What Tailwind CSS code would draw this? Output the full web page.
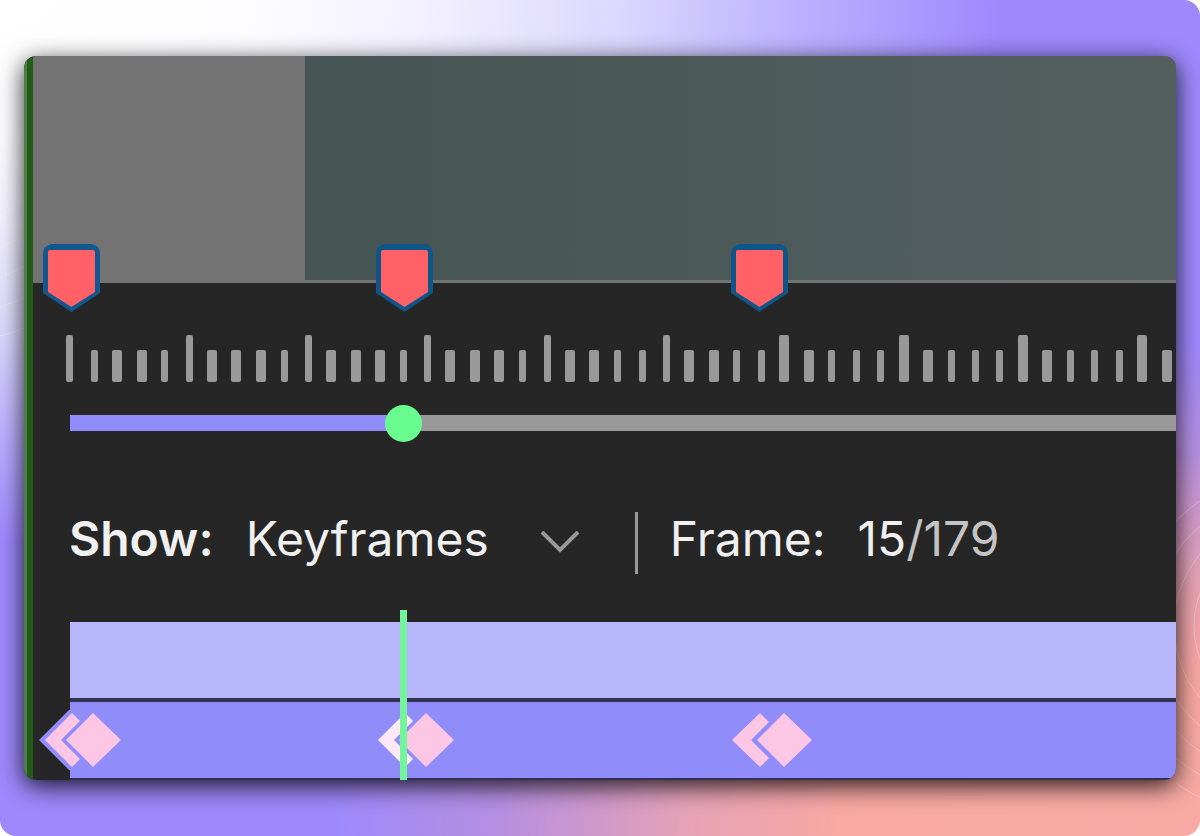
<!DOCTYPE html>
<html lang="en">
<head>
    <meta charset="UTF-8">
    <meta name="viewport" content="width=device-width, initial-scale=1.0">
    <title>Keyframe Timeline</title>
    <script src="https://cdn.jsdelivr.net/npm/@tailwindcss/browser@4"></script>
</head>
<body class="bg-white">
    <!-- Backdrop -->
    <div class="relative min-h-screen flex flex-col overflow-hidden rounded-2xl px-6 py-14 font-['Inter','Liberation_Sans',sans-serif] bg-[radial-gradient(ellipse_1000px_540px_at_0_0,#ffffff_0%,#fdfdff_25%,#f3f1ff_42%,#dcd7fd_62%,#b9acff_82%,transparent_100%),radial-gradient(ellipse_780px_500px_at_1110px_840px,#f9aaa6_0%,#f9a8a2_35%,#e5a2b8_55%,#b78fe0_78%,transparent_100%)] bg-[#9d89fd]">
        <!-- Faint rings at both edges -->
        <svg class="absolute left-0 top-0 w-6 h-full" fill="none" stroke="#fff" stroke-opacity=".35" aria-hidden="true">
            <circle cx="-60" cy="112" r="65" />
            <circle cx="-60" cy="112" r="92" />
            <circle cx="-60" cy="112" r="120" />
            <circle cx="-60" cy="112" r="148" />
            <circle cx="-60" cy="112" r="176" />
            <circle cx="-60" cy="112" r="204" />
            <circle cx="-60" cy="112" r="232" />
        </svg>
        <svg class="absolute right-0 bottom-0 w-6 h-[340px]" fill="none" stroke="#fff" stroke-opacity=".3" aria-hidden="true">
            <circle cx="110" cy="130" r="92" />
            <circle cx="110" cy="130" r="112" />
            <circle cx="110" cy="130" r="132" />
            <circle cx="110" cy="130" r="152" />
            <circle cx="110" cy="130" r="172" />
            <circle cx="110" cy="130" r="192" />
        </svg>

        <!-- Editor Panel -->
        <main class="relative flex flex-1 rounded-xl shadow-[0_6px_24px_rgba(0,0,0,0.85)]">
            <div class="flex flex-1 min-w-0 overflow-hidden rounded-xl bg-[#262626]">
                <div class="w-[3px] shrink-0 bg-[#4f7f49]"></div>
                <div class="w-[6px] shrink-0 bg-[#255b18]"></div>

                <div class="flex-1 min-w-0">
                    <!-- Preview -->
                    <section class="flex h-[227px] bg-[#737373]" aria-label="Preview">
                        <div class="w-[272px] shrink-0"></div>
                        <div class="flex-1 mb-[3px] bg-linear-to-r from-[#455553] via-[#4c5a5a] via-50% to-[#555f60]"></div>
                    </section>

                    <!-- Ruler -->
                    <section class="relative pt-13" aria-label="Ruler">
                        <svg class="absolute -top-10 left-2 w-[60px] h-[70px]" viewBox="0 0 60 70">
                            <path d="M10 1H51Q59 3 59 11V50L30.500 69L2 50V11Q2 3 10 1Z" fill="#11588f" />
                            <path d="M9 7H52Q54 7 54 9V49L30.500 64L7 49V9Q7 7 9 7Z" fill="#ff6166" />
                        </svg>
                        <svg class="absolute -top-10 left-[341px] w-[60px] h-[70px]" viewBox="0 0 60 70">
                            <path d="M10 1H51Q59 3 59 11V50L30.500 69L2 50V11Q2 3 10 1Z" fill="#0e5688" />
                            <path d="M9 7H52Q54 7 54 9V49L30.500 64L7 49V9Q7 7 9 7Z" fill="#ff6166" />
                        </svg>
                        <svg class="absolute -top-10 left-[696px] w-[60px] h-[70px]" viewBox="0 0 60 70">
                            <path d="M10 1H51Q59 3 59 11V50L30.500 69L2 50V11Q2 3 10 1Z" fill="#0e5688" />
                            <path d="M9 7H52Q54 7 54 9V49L30.500 64L7 49V9Q7 7 9 7Z" fill="#ff6166" />
                        </svg>

                        <svg id="ticks" class="block w-full h-[47px]" fill="#999" aria-hidden="true"></svg>

                        <div class="mt-[33px] pl-[19px] h-4 flex items-center">
                            <input id="scrubber" type="range" min="1" max="179" value="15" aria-label="Current frame" class="block shrink-0 w-[4270px] h-4 appearance-none outline-none bg-[linear-gradient(to_right,transparent_18px,#908dfb_18px,#908dfb_352px,#999999_352px)] [&::-webkit-slider-thumb]:appearance-none [&::-webkit-slider-thumb]:size-[37px] [&::-webkit-slider-thumb]:rounded-full [&::-webkit-slider-thumb]:bg-[#69fd8f]">
                        </div>
                    </section>

                    <!-- Controls -->
                    <section class="flex items-center mt-[81px] h-[62px] pl-9 text-[48px] leading-[54px] text-[#f0f0f0]">
                        <label for="show" class="pb-2 font-semibold">Show:</label>
                        <div class="relative flex items-center ml-8">
                            <select id="show" class="appearance-none w-[389px] pb-2 bg-transparent outline-none">
                                <option>Keyframes</option>
                                <option>All frames</option>
                            </select>
                            <svg class="absolute right-[54px] w-[42px] h-6 pointer-events-none" viewBox="0 0 42 24" fill="none" stroke="#999" stroke-width="4">
                                <path d="M3 1L21 19L39 1" />
                            </svg>
                        </div>
                        <div class="w-[3px] h-full shrink-0 bg-[#999]"></div>
                        <p class="flex pb-2 ml-8 whitespace-nowrap">
                            <span>Frame:</span>
                            <output for="scrubber" class="ml-8">15<span class="text-[#c4c4c4]">/179</span></output>
                        </p>
                    </section>

                    <!-- Tracks -->
                    <section class="relative mt-12 pl-[37px]" aria-label="Tracks">
                        <div class="h-[76px] bg-[#b9b7fc]"></div>
                        <div class="h-1 bg-[#343052]"></div>
                        <div class="h-[76px] bg-[#908dfb]"></div>
                        <div class="h-[2px] bg-[#343052]"></div>

                        <svg class="absolute left-1 top-[88px] w-[86px] h-[60px]" viewBox="0 0 86 60">
                            <path d="M2 30L33 -1L33 61Z" fill="#908dfb" />
                            <path d="M8 30L35 3L43 11L24 30L43 49L35 57Z" fill="#fdc6e4" />
                            <path d="M29 30L56 3L84 30L56 57Z" fill="#fdc6e4" />
                        </svg>
                        <svg class="absolute left-[337px] top-[88px] w-[86px] h-[60px]" viewBox="0 0 86 60">
                            <path d="M8 30L35 3L43 11L24 30L43 49L35 57Z" fill="#fde8f8" />
                            <path d="M29 30L56 3L84 30L56 57Z" fill="#fdc6e4" />
                        </svg>
                        <svg class="absolute left-[695px] top-[88px] w-[86px] h-[60px]" viewBox="0 0 86 60">
                            <path d="M4 30L32 3L41 12L23 30L41 48L32 57Z" fill="#fdc6e4" />
                            <path d="M29 30L56 3L84 30L56 57Z" fill="#fdc6e4" />
                        </svg>

                        <!-- Playhead -->
                        <div class="absolute left-[367px] -top-3 bottom-0 w-[7px] bg-[#73f49a]"></div>
                    </section>
                </div>
            </div>
        </main>
    </div>

    <script>
        // [left, width] of each tick, every fifth one is a major tick
        const ticks = [
            [33, 7], [58, 7], [79, 10], [104, 10], [128, 7],
            [153, 7], [174, 10], [198, 10], [223, 10], [248, 7],
            [272, 7], [293, 10], [318, 10], [342, 10], [367, 7],
            [391, 7], [412, 10], [437, 10], [461, 10], [486, 7],
            [511, 7], [532, 10], [556, 10], [581, 7], [606, 7],
            [630, 7], [651, 10], [676, 10], [700, 7], [725, 7],
            [746, 10], [771, 10], [795, 7], [820, 7], [844, 7],
            [866, 10], [890, 10], [915, 7], [939, 7], [963, 7],
            [985, 10], [1009, 10], [1034, 7], [1058, 7], [1083, 7],
            [1104, 10], [1129, 10],
        ];

        document.getElementById("ticks").innerHTML = ticks.map(([x, width], i) => {
            const y = i % 5 === 0 ? 0 : 15;
            return `<rect x="${x}" y="${y}" width="${width}" height="${47 - y}" rx="2" />`;
        }).join("");
    </script>
</body>
</html>
